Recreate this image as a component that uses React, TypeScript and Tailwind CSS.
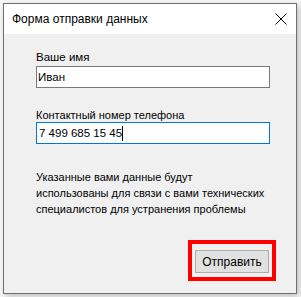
import React from "react";

export default function App() {
  const font = { fontFamily: '"Liberation Sans", Arial, sans-serif' };
  return (
    <div className="w-[301px] h-[297px] bg-[#f7f7f7] pt-[3px] pl-[3px]" style={font}>
      <div className="w-[294px] h-[291px] border border-[#6f6f6f] bg-[#f0f0f0] flex flex-col shadow-[2px_2px_6px_rgba(0,0,0,0.25)]">
        <div className="h-[30px] bg-white flex items-center justify-between pl-[8px] pr-[8px] shrink-0">
          <span className="text-[12px] leading-[16px] text-black">Форма отправки данных</span>
          <svg width="12" height="12" viewBox="0 0 12 12" className="mr-[1px]">
            <path d="M0.5 0.5 L11.5 11.5 M11.5 0.5 L0.5 11.5" stroke="#000" strokeWidth="1" />
          </svg>
        </div>
        <div className="flex flex-col pl-[32px] pt-[15px] text-[11px] leading-[16px] text-black">
          <span className="text-[11.5px]">Ваше имя</span>
          <div className="mt-[1px] w-[234px] h-[22px] border border-[#7a7a7a] bg-white flex items-center pl-[1px] text-[11.5px]">
            Иван
          </div>
          <span className="mt-[19px]">Контактный номер телефона</span>
          <div className="mt-[-1px] w-[234px] h-[22px] border border-[#0078d7] bg-white flex items-center pl-[2px] text-[11.5px]">
            <span>7 499 685 15 45</span>
            <span className="w-[1px] h-[15px] bg-black"></span>
          </div>
          <p className="mt-[25px] whitespace-nowrap">
            Указанные вами данные будут
            <br />
            использованы для связи с вами технических
            <br />
            специалистов для устранения проблемы
          </p>
        </div>
        <div className="flex justify-end pr-[20px] mt-[23px]">
          <div className="border-[4px] border-[#ff0000] pt-[6px] pb-[4px] pl-[3px] pr-[3px]">
            <div className="w-[74px] h-[23px] border border-[#adadad] bg-[#e1e1e1] flex items-center justify-center text-[12px] text-black">
              Отправить
            </div>
          </div>
        </div>
      </div>
    </div>
  );
}
